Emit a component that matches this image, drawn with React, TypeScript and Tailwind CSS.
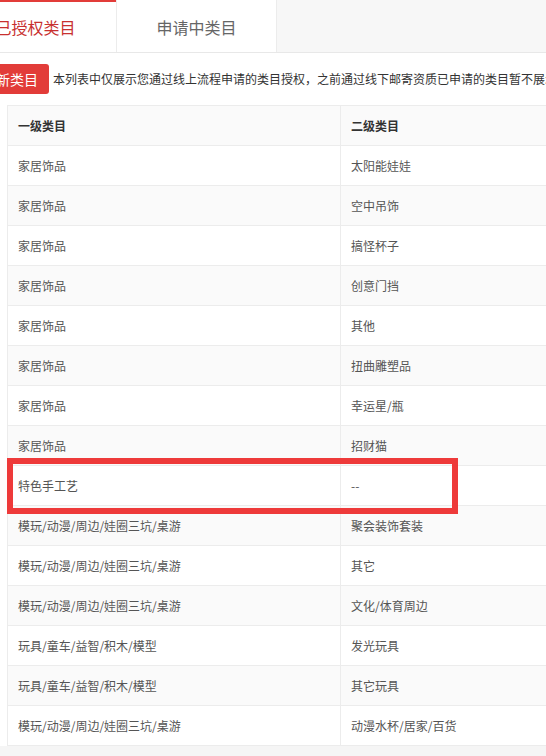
const rows: [string, string][] = [
  ["家居饰品", "太阳能娃娃"],
  ["家居饰品", "空中吊饰"],
  ["家居饰品", "搞怪杯子"],
  ["家居饰品", "创意门挡"],
  ["家居饰品", "其他"],
  ["家居饰品", "扭曲雕塑品"],
  ["家居饰品", "幸运星/瓶"],
  ["家居饰品", "招财猫"],
  ["特色手工艺", "--"],
  ["模玩/动漫/周边/娃圈三坑/桌游", "聚会装饰套装"],
  ["模玩/动漫/周边/娃圈三坑/桌游", "其它"],
  ["模玩/动漫/周边/娃圈三坑/桌游", "文化/体育周边"],
  ["玩具/童车/益智/积木/模型", "发光玩具"],
  ["玩具/童车/益智/积木/模型", "其它玩具"],
  ["模玩/动漫/周边/娃圈三坑/桌游", "动漫水杯/居家/百货"],
];

export default function App() {
  return (
    <div
      className="h-[756px] w-[546px] overflow-hidden bg-white"
      style={{ fontFamily: '"Noto Sans CJK SC", "Liberation Sans", sans-serif' }}
    >
      {/* tabs */}
      <div className="flex h-[53px] border-b border-[#e8e8e8] bg-[#f7f7f7]">
        <div className="-ml-[45px] flex w-[161px] shrink-0 items-center justify-center border-t-2 border-[#e23c39] bg-white pb-[1px] text-base text-[#c8302f]">
          已授权类目
        </div>
        <div className="flex w-[161px] shrink-0 items-center justify-center border-x border-[#ececec] bg-white pt-[2px] text-base text-[#666]">
          申请中类目
        </div>
      </div>

      {/* notice */}
      <div className="flex h-[52px] items-center gap-[4px] whitespace-nowrap">
        <button className="-ml-[43px] -mt-[1px] h-[30px] shrink-0 rounded-[3px] bg-[#e23c39] px-[11px] text-sm text-white">
          申请新类目
        </button>
        <span className="text-xs text-[#333]">
          本列表中仅展示您通过线上流程申请的类目授权，之前通过线下邮寄资质已申请的类目暂不展示
        </span>
      </div>

      {/* table */}
      <div className="ml-[7px] border-l border-t border-[#ececec] text-xs">
        <div className="flex h-10 items-center border-b border-[#ececec] bg-[#fafafa] font-bold text-[#333]">
          <div className="flex h-full w-[333px] shrink-0 items-center border-r border-[#ececec] pl-[10px]">
            一级类目
          </div>
          <div className="pl-[10px]">二级类目</div>
        </div>
        {rows.map(([a, b], i) => (
          <div
            key={i}
            className={`relative flex h-10 items-center border-b border-[#ececec] text-[#555] ${
              i % 2 === 1 ? "bg-[#fafafa]" : "bg-white"
            } ${i === 8 ? "z-10" : ""}`}
          >
            <div className="flex h-full w-[333px] shrink-0 items-center border-r border-[#ececec] pl-[10px]">
              {a}
            </div>
            <div className="pl-[10px]">{b}</div>
            {i === 8 && (
              <div className="absolute -left-[1px] -top-[8px] z-10 h-[56px] w-[451px] border-[6px] border-[#ee3a3a]" />
            )}
          </div>
        ))}
      </div>
      <div className="h-full bg-[#f5f5f5]" />
    </div>
  );
}
